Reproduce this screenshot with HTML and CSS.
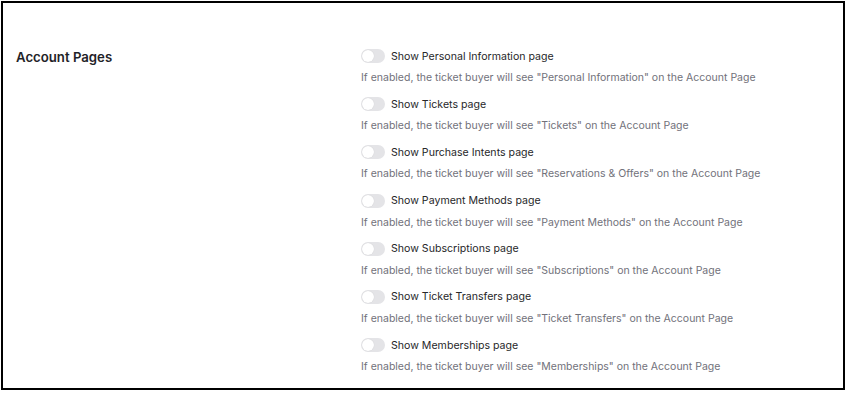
FILE: index.html
```html
<!DOCTYPE html>
<html lang="en">

<head>
    <meta charset="UTF-8">
    <meta name="viewport" content="width=device-width, initial-scale=1.0">
    <title>Account Pages</title>

    <link rel="stylesheet" href="styles.css">
</head>

<body>

    <div class="container">
        <h2 class="section-title">Account Pages</h2>

        <div class="options">
            <div class="option">
                <label class="option-row">
                    <span class="toggle"><span class="knob"></span></span>
                    <span class="option-label">Show Personal Information page</span>
                </label>
                <p class="option-desc">If enabled, the ticket buyer will see "Personal Information" on the Account Page</p>
            </div>

            <div class="option">
                <label class="option-row">
                    <span class="toggle"><span class="knob"></span></span>
                    <span class="option-label">Show Tickets page</span>
                </label>
                <p class="option-desc">If enabled, the ticket buyer will see "Tickets" on the Account Page</p>
            </div>

            <div class="option">
                <label class="option-row">
                    <span class="toggle"><span class="knob"></span></span>
                    <span class="option-label">Show Purchase Intents page</span>
                </label>
                <p class="option-desc">If enabled, the ticket buyer will see "Reservations &amp; Offers" on the Account Page</p>
            </div>

            <div class="option">
                <label class="option-row">
                    <span class="toggle"><span class="knob"></span></span>
                    <span class="option-label">Show Payment Methods page</span>
                </label>
                <p class="option-desc">If enabled, the ticket buyer will see "Payment Methods" on the Account Page</p>
            </div>

            <div class="option">
                <label class="option-row">
                    <span class="toggle"><span class="knob"></span></span>
                    <span class="option-label">Show Subscriptions page</span>
                </label>
                <p class="option-desc">If enabled, the ticket buyer will see "Subscriptions" on the Account Page</p>
            </div>

            <div class="option">
                <label class="option-row">
                    <span class="toggle"><span class="knob"></span></span>
                    <span class="option-label">Show Ticket Transfers page</span>
                </label>
                <p class="option-desc">If enabled, the ticket buyer will see "Ticket Transfers" on the Account Page</p>
            </div>

            <div class="option">
                <label class="option-row">
                    <span class="toggle"><span class="knob"></span></span>
                    <span class="option-label">Show Memberships page</span>
                </label>
                <p class="option-desc">If enabled, the ticket buyer will see "Memberships" on the Account Page</p>
            </div>
        </div>
    </div>

</body>

</html>
```

FILE: styles.css
```css
body {
    font-family: Inter, "Noto Sans", Arial, sans-serif;
    background-color: #fff;
    margin: 0;
    padding: 0;
}

.container {
    margin: 1px;
    height: 389px;
    box-sizing: border-box;
    border: 2px solid #000;
    padding: 45px 13px 0 13px;
    display: flex;
}

.section-title {
    width: 345px;
    margin: 0;
    font-size: 13.2px;
    font-weight: 600;
    line-height: 18px;
    color: #1f2328;
}

.options {
    display: flex;
    flex-direction: column;
}

.option {
    margin-bottom: 10.2px;
}

.option-row {
    display: flex;
    align-items: center;
    height: 16px;
}

.toggle {
    width: 24px;
    height: 14px;
    border-radius: 7px;
    background-color: #e4e4e7;
    margin-right: 6px;
    display: flex;
    align-items: center;
    padding: 0 1px;
    box-sizing: border-box;
}

.knob {
    width: 12px;
    height: 12px;
    border-radius: 50%;
    background-color: #fff;
    box-shadow: 0 0 1px rgba(0, 0, 0, 0.15);
}

.option-label {
    font-size: 10.6px;
    color: #27272a;
}

.option-desc {
    margin: 6px 0 0 0;
    font-size: 10.5px;
    line-height: 16px;
    color: #71717a;
}
```
